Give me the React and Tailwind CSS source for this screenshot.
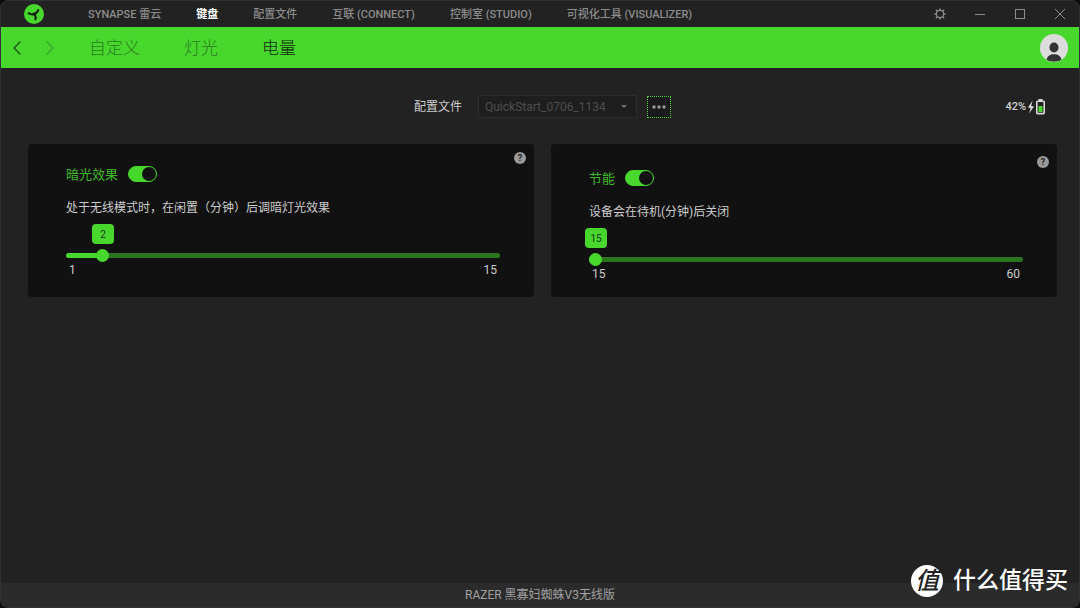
import { useState } from 'react';
import { ChevronLeft, ChevronRight } from 'lucide-react';
import clsx from 'clsx';

const MODULES = [
  'SYNAPSE 雷云',
  '键盘',
  '配置文件',
  '互联 (CONNECT)',
  '控制室 (STUDIO)',
  '可视化工具 (VISUALIZER)',
];

const TABS = ['自定义', '灯光', '电量'];

const THUMB = 13;

function Logo() {
  return (
    <svg viewBox="0 0 20 20" className="w-5 h-5" aria-hidden="true">
      <circle cx="10" cy="10" r="10" fill="#47d72d" />
      <path
        d="M4.6 9.2c1.800 1.200 3.600 1.600 5.400 1M10 10.200c2-.6 3.600-2 4.200-4.200M10 10.200c1.600 1.200 2 3.200 1.400 5.200"
        fill="none"
        stroke="#12210f"
        strokeWidth="2"
        strokeLinecap="round"
      />
      <path d="M7.400 9.400l3-.8 2.200-1.400-.4 2.800-.4 1.200.4 2.200-1.800-2.200z" fill="#12210f" />
    </svg>
  );
}

function GearIcon() {
  return (
    <svg viewBox="0 0 12 12" className="w-3 h-3" fill="none" stroke="currentColor" aria-hidden="true">
      <circle cx="6" cy="6" r="3.600" strokeWidth="1.200" />
      <path
        d="M6 .4v2M6 9.600v2M.4 6h2M9.600 6h2M1.900 1.900l1.500 1.500M8.600 8.600l1.500 1.500M10.100 1.900L8.600 3.400M3.400 8.600l-1.500 1.500"
        strokeWidth="1.500"
      />
    </svg>
  );
}

function WindowControls() {
  return (
    <div className="flex items-center gap-7 pr-[13px] text-[#8c8c8c]">
      <button aria-label="设置" className="w-3 h-3">
        <GearIcon />
      </button>
      <button aria-label="最小化" className="w-3 h-3">
        <svg viewBox="0 0 12 12" className="w-3 h-3" stroke="currentColor" aria-hidden="true">
          <path d="M1 6.500h10" />
        </svg>
      </button>
      <button aria-label="最大化" className="w-3 h-3">
        <svg viewBox="0 0 12 12" className="w-3 h-3" fill="none" stroke="currentColor" aria-hidden="true">
          <rect x="1.500" y="1.500" width="9" height="9" />
        </svg>
      </button>
      <button aria-label="关闭" className="w-3 h-3">
        <svg viewBox="0 0 12 12" className="w-3 h-3" stroke="currentColor" aria-hidden="true">
          <path d="M1 1l10 10M11 1L1 11" />
        </svg>
      </button>
    </div>
  );
}

function TitleBar() {
  const [active, setActive] = useState('键盘');

  return (
    <header className="flex items-center h-[26px] pl-[23px]">
      <Logo />
      <nav className="flex-1 flex gap-[35px] pt-[2px] pl-11 text-[11px] font-medium">
        {MODULES.map((name) => (
          <button
            key={name}
            onClick={() => setActive(name)}
            className={clsx('whitespace-nowrap', active === name ? 'text-white font-bold' : 'text-[#8c8c8c]')}
          >
            {name}
          </button>
        ))}
      </nav>
      <WindowControls />
    </header>
  );
}

function TabBar() {
  const [active, setActive] = useState('电量');

  return (
    <div className="flex items-center h-[41px] bg-[#47d72d] pl-1 pr-[11px]">
      <button aria-label="后退" className="text-[#1c4a14]">
        <ChevronLeft className="w-6 h-6" strokeWidth={1.25} />
      </button>
      <button aria-label="前进" className="ml-[9px] text-[#38a525]">
        <ChevronRight className="w-6 h-6" strokeWidth={1.25} />
      </button>
      <nav className="flex-1 flex gap-11 pt-[2px] pl-[27px] text-[17px] font-light">
        {TABS.map((name) => (
          <button
            key={name}
            onClick={() => setActive(name)}
            className={active === name ? 'text-[#0f2a0a]' : 'text-[#2a7d1c]'}
          >
            {name}
          </button>
        ))}
      </nav>
      <button aria-label="账户" className="w-7 h-7 rounded-full overflow-hidden bg-[#dcdcdc]">
        <svg viewBox="0 0 28 28" className="w-7 h-7" fill="#333" aria-hidden="true">
          <ellipse cx="14" cy="13.500" rx="4.500" ry="5" />
          <path d="M6.500 26c.5-4 3.500-5.800 7.500-5.800s7 1.800 7.500 5.800c-4.500 2.300-10.500 2.300-15 0z" />
        </svg>
      </button>
    </div>
  );
}

function Battery() {
  return (
    <div className="flex items-center justify-end gap-px pr-3 text-[11px] font-medium text-[#d0d0d0]">
      <span className="pt-[2px]">42%</span>
      <svg viewBox="0 0 18 16" className="w-[18px] h-4" aria-hidden="true">
        <path d="M5.600 1.600L1 8.600l2.600.4L2 14.600 7 7.600l-2.800-.6z" fill="#d8d8d8" />
        <path d="M11.500 1h4" fill="none" stroke="#d8d8d8" strokeWidth="2" />
        <rect x="9.800" y="2.200" width="7.400" height="12.400" rx=".8" fill="#222" stroke="#d8d8d8" strokeWidth="1.600" />
        <rect x="11.500" y="7" width="4" height="6" fill="#47d72d" />
      </svg>
    </div>
  );
}

function ProfileBar() {
  return (
    <div className="grid grid-cols-[1fr_auto_1fr] items-center pt-[27px]">
      <div />
      <div className="flex items-center">
        <label htmlFor="profile" className="text-xs text-[#cccccc]">
          配置文件
        </label>
        <div className="grid ml-4">
          <select
            id="profile"
            disabled
            className="col-start-1 row-start-1 appearance-none w-[159px] h-[23px] px-[6px] text-xs text-[#4d4d4d] bg-[#1e1e1e] border border-[#2d2d2d] opacity-100"
          >
            <option>QuickStart_0706_1134</option>
          </select>
          <svg
            viewBox="0 0 6 3"
            className="col-start-1 row-start-1 self-center justify-self-end w-[6px] h-[3px] mr-[10px] pointer-events-none"
            aria-hidden="true"
          >
            <path d="M0 0h6L3 3z" fill="#707070" />
          </svg>
        </div>
        <button
          aria-label="更多"
          className="flex items-center justify-center ml-[10px] w-6 h-[22px] bg-[#1a1a1a] border border-dotted border-[#47d72d]"
        >
          <svg viewBox="0 0 14 4" className="w-[14px] h-1" fill="#999" aria-hidden="true">
            <circle cx="2" cy="2" r="1.700" />
            <circle cx="7" cy="2" r="1.700" />
            <circle cx="12" cy="2" r="1.700" />
          </svg>
        </button>
      </div>
      <Battery />
    </div>
  );
}

function Slider({ label, min, max, value, onChange }) {
  const ratio = (value - min) / (max - min);
  const thumbLeft = `(100% - ${THUMB}px) * ${ratio}`;

  return (
    <div className="pt-2">
      <output
        className="flex items-center justify-center w-[22px] h-5 rounded-sm bg-[#47d72d] text-[10px] text-[#17380f]"
        style={{ marginLeft: `calc(${thumbLeft} - 4px)` }}
      >
        {value}
      </output>
      <input
        type="range"
        aria-label={label}
        min={min}
        max={max}
        value={value}
        onChange={(e) => onChange(Number(e.target.value))}
        className="block w-full h-[13px] mt-[5px] appearance-none bg-transparent [&::-webkit-slider-runnable-track]:h-[5px] [&::-webkit-slider-runnable-track]:rounded-full [&::-webkit-slider-runnable-track]:bg-[image:var(--fill)] [&::-webkit-slider-thumb]:appearance-none [&::-webkit-slider-thumb]:w-[13px] [&::-webkit-slider-thumb]:h-[13px] [&::-webkit-slider-thumb]:-mt-1 [&::-webkit-slider-thumb]:rounded-full [&::-webkit-slider-thumb]:bg-[#47d72d]"
        style={{
          '--fill': `linear-gradient(to right, #47d72d calc(${thumbLeft} + 6px), #2a751d calc(${thumbLeft} + 6px))`,
        }}
      />
      <div className="flex justify-between px-[3px] text-xs leading-4 text-[#cccccc]">
        <span>{min}</span>
        <span>{max}</span>
      </div>
    </div>
  );
}

function SettingCard({ id, title, description, min, max, initial, className }) {
  const [enabled, setEnabled] = useState(true);
  const [value, setValue] = useState(initial);

  return (
    <section className={clsx('rounded bg-[#111111]', className)}>
      <div className="flex justify-end pr-2">
        <button
          aria-label="帮助"
          className="flex items-center justify-center w-3 h-3 rounded-full bg-[#999999] text-[9px] font-bold leading-none text-[#222222]"
        >
          ?
        </button>
      </div>
      <div className="pl-[38px] pr-[34px]">
        <div className="flex items-center gap-[10px] h-5">
          <label htmlFor={id} className="pt-px text-[13px] text-[#3fb92a]">
            {title}
          </label>
          <input
            id={id}
            type="checkbox"
            checked={enabled}
            onChange={(e) => setEnabled(e.target.checked)}
            className="appearance-none flex items-center w-[29px] h-4 rounded-full border border-[#47d72d] checked:bg-[#47d72d] before:w-[14px] before:h-[14px] before:rounded-full before:bg-[#47d72d] checked:before:ml-auto checked:before:bg-[#111111]"
          />
        </div>
        <p className="pt-4 text-xs leading-4 text-[#cccccc]">{description}</p>
        <Slider label={title} min={min} max={max} value={value} onChange={setValue} />
      </div>
    </section>
  );
}

function Watermark() {
  return (
    <div className="absolute right-[11px] bottom-[10px] flex items-center gap-[10px] text-white pointer-events-none">
      <span className="flex items-center justify-center w-8 h-8 rounded-full bg-white text-[#222222] text-2xl leading-none italic font-medium">
        值
      </span>
      <span className="text-[23px] leading-8 font-medium">什么值得买</span>
    </div>
  );
}

export default function App() {
  return (
    <div className="min-h-screen flex bg-[#0c0c0e] font-[Roboto,'Noto_Sans_CJK_SC',sans-serif]">
      <div className="relative flex-1 flex flex-col rounded-lg overflow-hidden border border-[#303038] bg-[#222222]">
        <TitleBar />
        <TabBar />
        <main className="flex-1 pl-[27px] pr-[22px]">
          <ProfileBar />
          <div className="grid grid-cols-2 gap-[17px] pt-[26px]">
            <SettingCard
              id="dim"
              title="暗光效果"
              description="处于无线模式时，在闲置（分钟）后调暗灯光效果"
              min={1}
              max={15}
              initial={2}
              className="pt-2 pb-[19px]"
            />
            <SettingCard
              id="power"
              title="节能"
              description="设备会在待机(分钟)后关闭"
              min={15}
              max={60}
              initial={15}
              className="pt-3 pb-[15px]"
            />
          </div>
        </main>
        <footer className="flex items-center justify-center h-6 bg-[#2b2b2b] text-xs text-[#a0a0a0]">
          RAZER 黑寡妇蜘蛛V3无线版
        </footer>
        <Watermark />
      </div>
    </div>
  );
}
